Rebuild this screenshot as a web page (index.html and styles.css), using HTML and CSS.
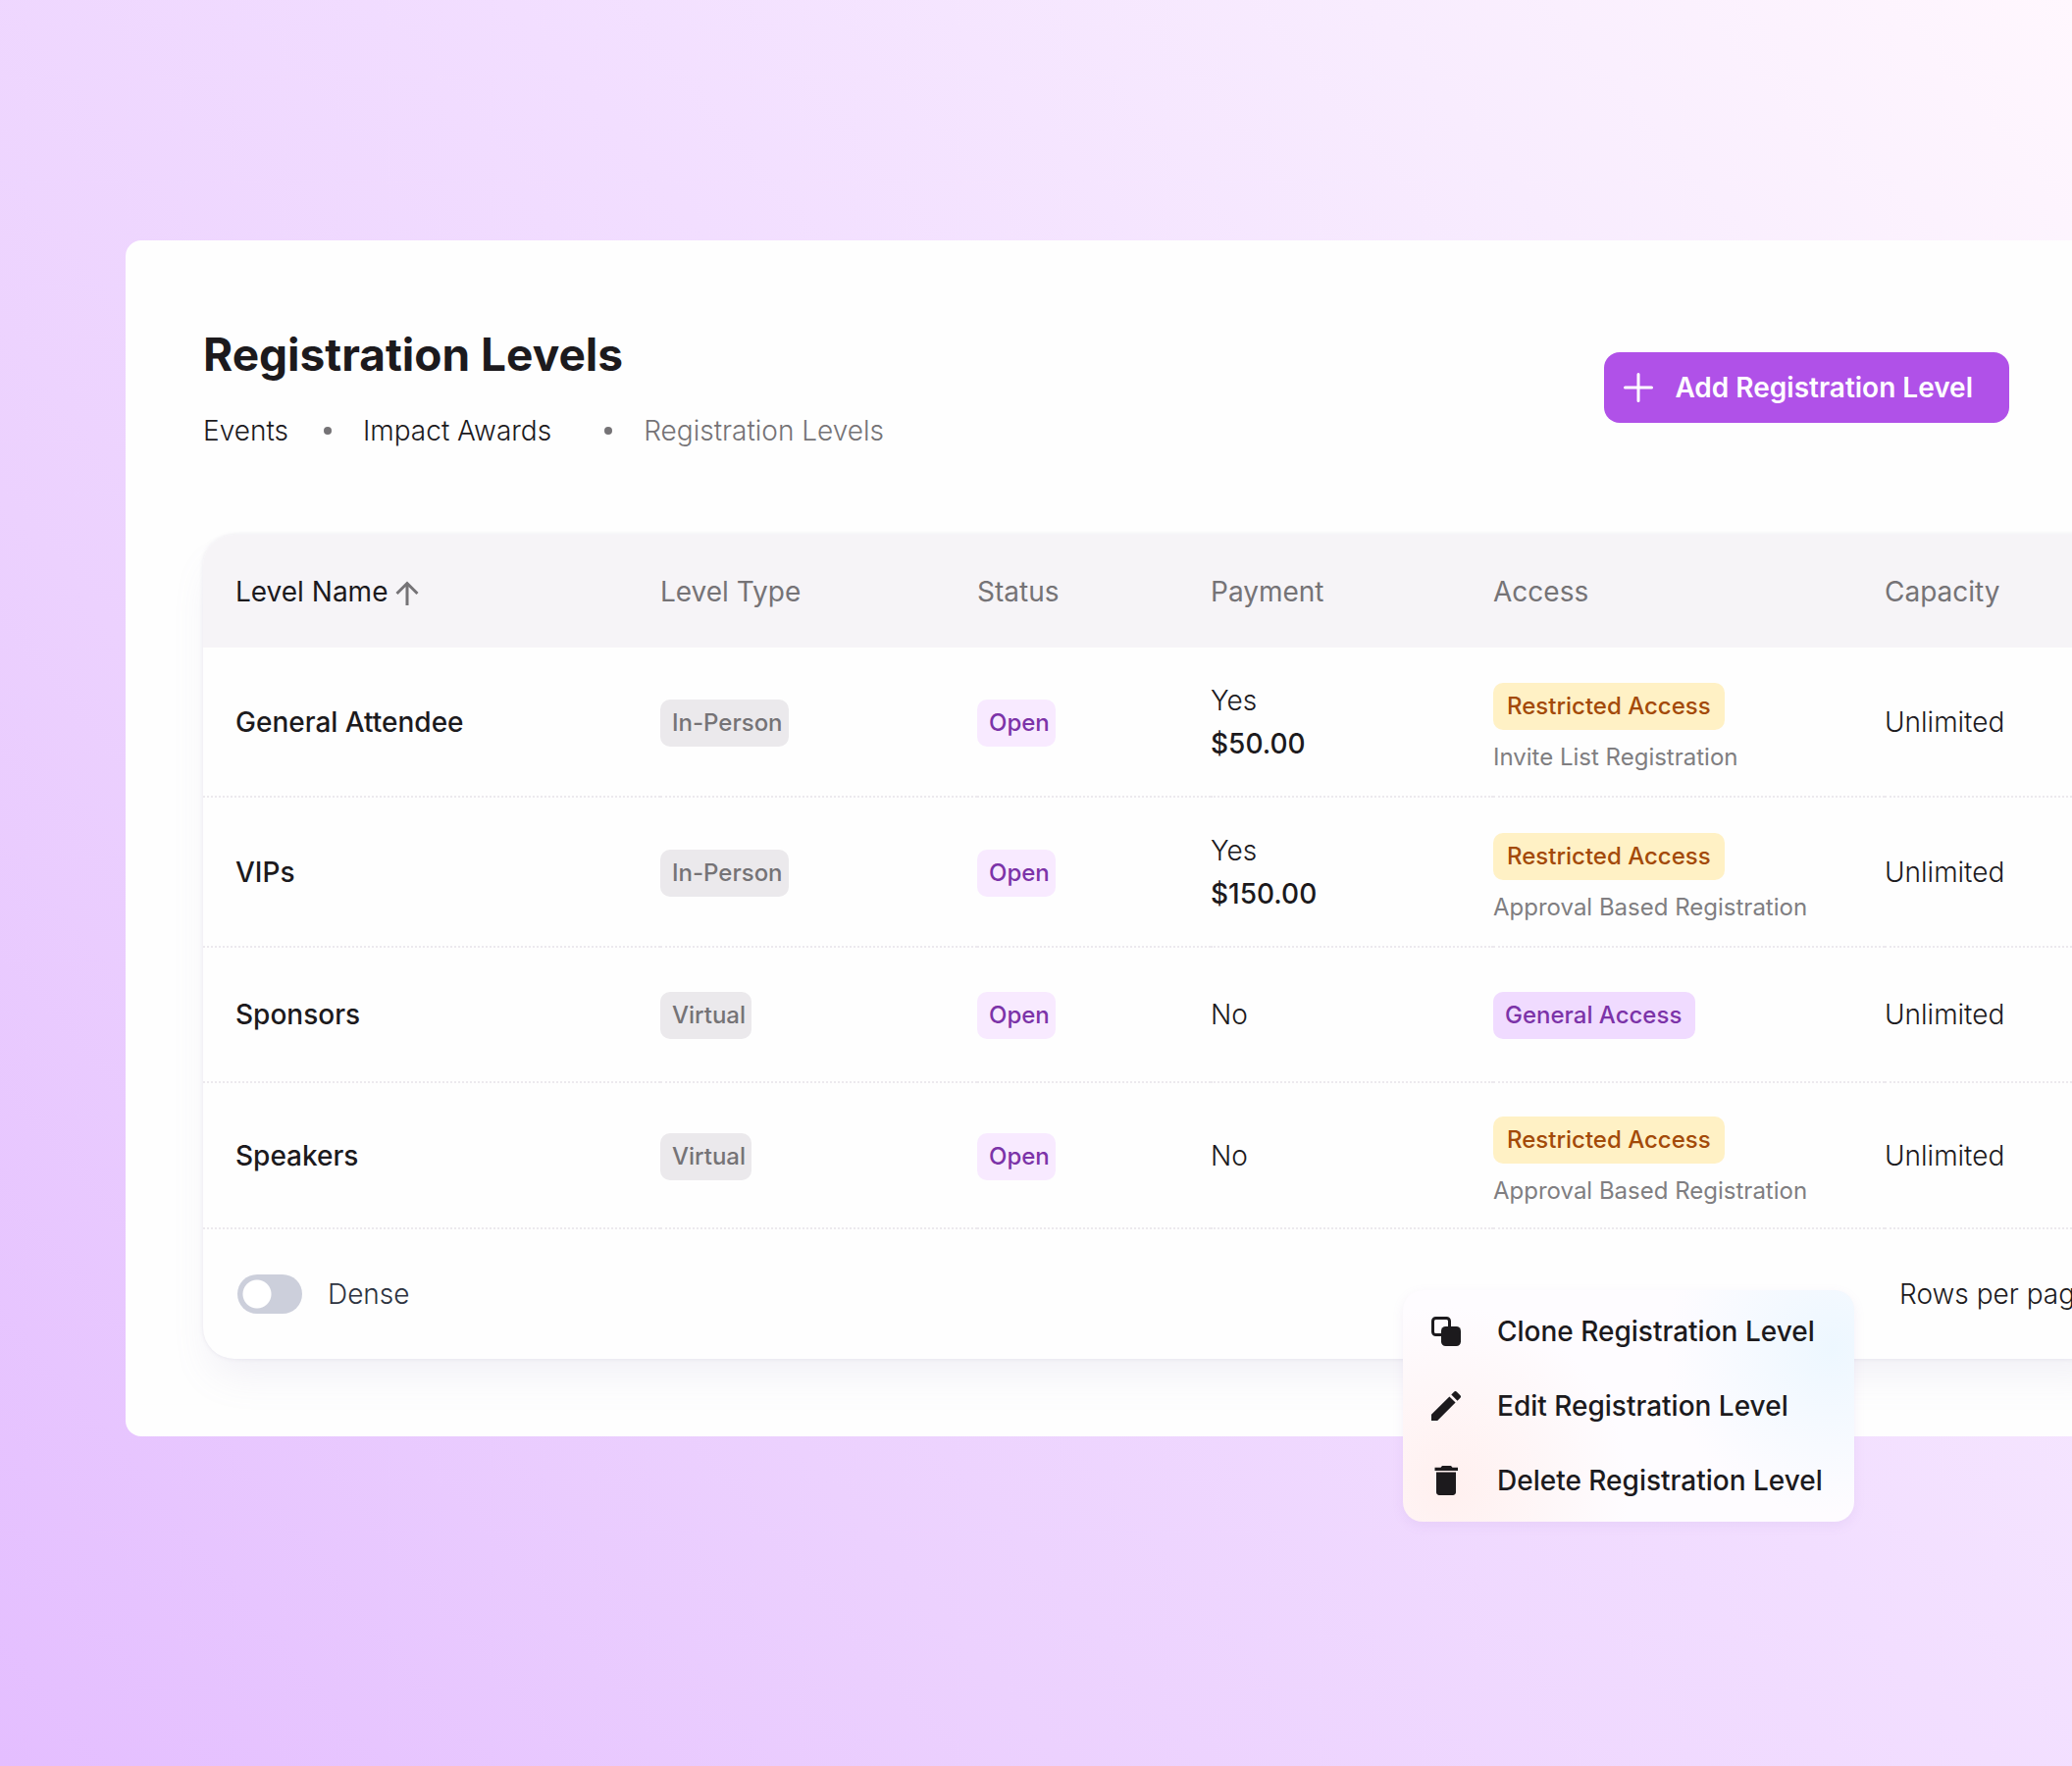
FILE: index.html
```html
<!DOCTYPE html>
<html lang="en">

<head>
	<meta charset="utf-8">
	<title>Registration Levels</title>
	<link rel="stylesheet" href="styles.css">
</head>

<body>
	<main class="panel">
		<header class="head">
			<div>
				<h1>Registration Levels</h1>
				<ul class="crumbs">
					<li><a href="#">Events</a></li>
					<li class="event"><a href="#">Impact Awards</a></li>
					<li>Registration Levels</li>
				</ul>
			</div>
			<button type="button" class="add">
				<svg width="30" height="30" viewBox="0 0 30 30"><path d="M15 1.5v27M1.5 15h27" stroke="#fff" stroke-width="3" stroke-linecap="round"/></svg>
				Add Registration Level
			</button>
		</header>

		<div class="card">
			<table>
				<colgroup>
					<col class="c-name">
					<col class="c-type">
					<col class="c-status">
					<col class="c-payment">
					<col class="c-access">
					<col class="c-capacity">
				</colgroup>
				<thead>
					<tr>
						<th class="sorted">Level Name <svg width="24" height="26" viewBox="0 0 24 26"><path d="M12 25V2.5M1.500 13L12 2.500 22.500 13" fill="none" stroke="#757376" stroke-width="3"/></svg></th>
						<th>Level Type</th>
						<th>Status</th>
						<th>Payment</th>
						<th>Access</th>
						<th>Capacity</th>
					</tr>
				</thead>
				<tbody>
					<tr class="tall">
						<td class="strong">General Attendee</td>
						<td><span class="badge grey">In-Person</span></td>
						<td><span class="badge open">Open</span></td>
						<td>Yes<br><span class="strong">$50.00</span></td>
						<td class="access"><span class="badge restricted">Restricted Access</span><small>Invite List Registration</small></td>
						<td>Unlimited</td>
					</tr>
					<tr class="tall">
						<td class="strong">VIPs</td>
						<td><span class="badge grey">In-Person</span></td>
						<td><span class="badge open">Open</span></td>
						<td>Yes<br><span class="strong">$150.00</span></td>
						<td class="access"><span class="badge restricted">Restricted Access</span><small>Approval Based Registration</small></td>
						<td>Unlimited</td>
					</tr>
					<tr class="short">
						<td class="strong">Sponsors</td>
						<td><span class="badge grey">Virtual</span></td>
						<td><span class="badge open">Open</span></td>
						<td>No</td>
						<td><span class="badge general">General Access</span></td>
						<td>Unlimited</td>
					</tr>
					<tr>
						<td class="strong">Speakers</td>
						<td><span class="badge grey">Virtual</span></td>
						<td><span class="badge open">Open</span></td>
						<td>No</td>
						<td class="access"><span class="badge restricted">Restricted Access</span><small>Approval Based Registration</small></td>
						<td>Unlimited</td>
					</tr>
				</tbody>
			</table>
			<div class="foot">
				<label class="dense"><input type="checkbox" class="switch">Dense</label>
				<span class="pager">Rows per page:</span>
			</div>
		</div>

		<div class="menu">
			<button type="button">
				<svg width="30" height="30" viewBox="0 0 30 30"><rect x="1.5" y="1.5" width="17" height="17" rx="3" fill="none" stroke="#1c1a1d" stroke-width="3"/><rect x="10" y="10" width="20" height="20" rx="4.5" fill="#1c1a1d"/></svg>
				Clone Registration Level
			</button>
			<button type="button">
				<svg width="30" height="30" viewBox="0 0 30 30"><path d="M0 23.8V30h6.2L24.6 11.600l-6.200-6.200zM29.500 6.700c.7-.7.7-1.700 0-2.400L25.700.5c-.7-.7-1.700-.7-2.400 0l-3 3 6.200 6.200z" fill="#1c1a1d"/></svg>
				Edit Registration Level
			</button>
			<button type="button">
				<svg width="30" height="30" viewBox="0 0 30 30"><path d="M5 27c0 1.600 1.400 3 3 3h14c1.600 0 3-1.400 3-3V6.500H5zM27 1.700h-5.500L20 0h-9L9.500 1.700H3.500V5H27z" fill="#1c1a1d"/></svg>
				Delete Registration Level
			</button>
		</div>
	</main>
</body>

</html>
```

FILE: styles.css
```css
* {
	box-sizing: border-box;
}

body {
	margin: 0;
	min-height: 100vh;
	overflow-x: hidden;
	padding: 245px 0 334px 128px;
	font: 300 28px/44px Inter, "Liberation Sans", sans-serif;
	color: #1c1a1d;
	background: linear-gradient(50deg, #e4beff 0%, #ecd1fe 30%, #f2deff 56%, #f8ecfe 80%, #fff7fe 100%);
}

button {
	font: inherit;
	color: inherit;
	border: 0;
	background: none;
	cursor: pointer;
}

a {
	color: inherit;
	text-decoration: none;
}

.panel {
	position: relative;
	background: #fefefe;
	border-radius: 16px 0 0 16px;
	padding: 88px 0 79px 79px;
}

.head {
	display: flex;
	justify-content: space-between;
	align-items: center;
	padding-right: 64px;
	margin-bottom: 84px;
}

h1 {
	margin: 0 0 28px;
	font-size: 46px;
	line-height: 56px;
	font-weight: 700;
}

.crumbs {
	display: flex;
	margin: 0;
	padding: 0;
	list-style: none;
}

.crumbs li:last-child {
	color: #757376;
}

.crumbs li + li::before {
	content: "";
	display: inline-block;
	width: 8px;
	height: 8px;
	margin: 0 32px 4px 36px;
	border-radius: 50%;
	background: #757376;
	vertical-align: middle;
}

.crumbs .event {
	padding-right: 18px;
}

.add {
	display: flex;
	align-items: center;
	gap: 22px;
	height: 72px;
	margin-bottom: 4px;
	padding: 0 37px 0 20px;
	border-radius: 16px;
	background: #b051e8;
	color: #fff;
	font-weight: 600;
}

/* runs past the right edge of the window */
.card {
	margin-right: -48px;
	border-radius: 32px;
	background: #fefefe;
	box-shadow: 0 0 4px rgba(145, 130, 171, .16), 0 24px 40px -8px rgba(145, 140, 190, .12);
}

table {
	width: 100%;
	table-layout: fixed;
	border-collapse: separate;
	border-spacing: 0;
}

.c-name {
	width: 466px;
}

.c-type {
	width: 323px;
}

.c-status {
	width: 238px;
}

.c-payment {
	width: 288px;
}

.c-access {
	width: 399px;
}

th {
	height: 115px;
	padding: 0;
	text-align: left;
	font-weight: 400;
	color: #757376;
	background: #f6f4f7;
}

th:first-child {
	border-top-left-radius: 32px;
}

th:first-child,
td:first-child {
	padding-left: 33px;
}

.sorted {
	color: #1c1a1d;
}

.sorted svg {
	vertical-align: middle;
}

td {
	height: 149px;
	padding: 0;
	border-bottom: 2px dotted #ece9ee;
}

.tall td {
	height: 153px;
}

.short td {
	height: 138px;
}

td.access {
	padding-top: 14px;
}

.strong {
	font-weight: 500;
}

.badge {
	display: table;
	margin-top: 2px;
	padding: 0 6px 0 12px;
	border-radius: 10px;
	font-size: 24px;
	line-height: 48px;
	font-weight: 500;
	white-space: nowrap;
}

.grey {
	background: #ebe9ec;
	color: #757376;
}

.open {
	background: #f8eaff;
	color: #7c33a8;
}

.general {
	padding-right: 14px;
	background: #f0dbff;
	color: #7c33a8;
}

.restricted {
	padding: 0 14px;
	background: #fff1c5;
	color: #a34a09;
}

small {
	display: block;
	margin-top: 8px;
	font-size: 24px;
	line-height: 40px;
	font-weight: 400;
	color: #807e81;
}

.foot {
	display: flex;
	justify-content: space-between;
	align-items: center;
	height: 132px;
	padding-left: 35px;
}

.dense {
	display: flex;
	align-items: center;
	gap: 26px;
	color: #2d3340;
}

.switch {
	appearance: none;
	width: 66px;
	height: 40px;
	margin: 0;
	border-radius: 20px;
	background: radial-gradient(circle at 20px 20px, #fff 14px, #cccfdb 15px);
}

.pager {
	flex: 0 0 224px;
	white-space: nowrap;
}

.menu {
	position: absolute;
	right: 222px;
	bottom: -87px;
	display: flex;
	flex-direction: column;
	width: 460px;
	padding: 4px 0;
	border-radius: 20px;
	background: radial-gradient(circle at 95% 25%, #edf7ff 0, rgba(237, 247, 255, 0) 36%), radial-gradient(circle at 10% 85%, #fff0ef 0, rgba(255, 240, 239, 0) 40%), #fefcff;
	box-shadow: 0 4px 12px rgba(160, 120, 200, .1);
}

.menu button {
	display: flex;
	align-items: center;
	gap: 37px;
	height: 76px;
	padding: 0 29px;
	font-weight: 500;
	white-space: nowrap;
}
```
